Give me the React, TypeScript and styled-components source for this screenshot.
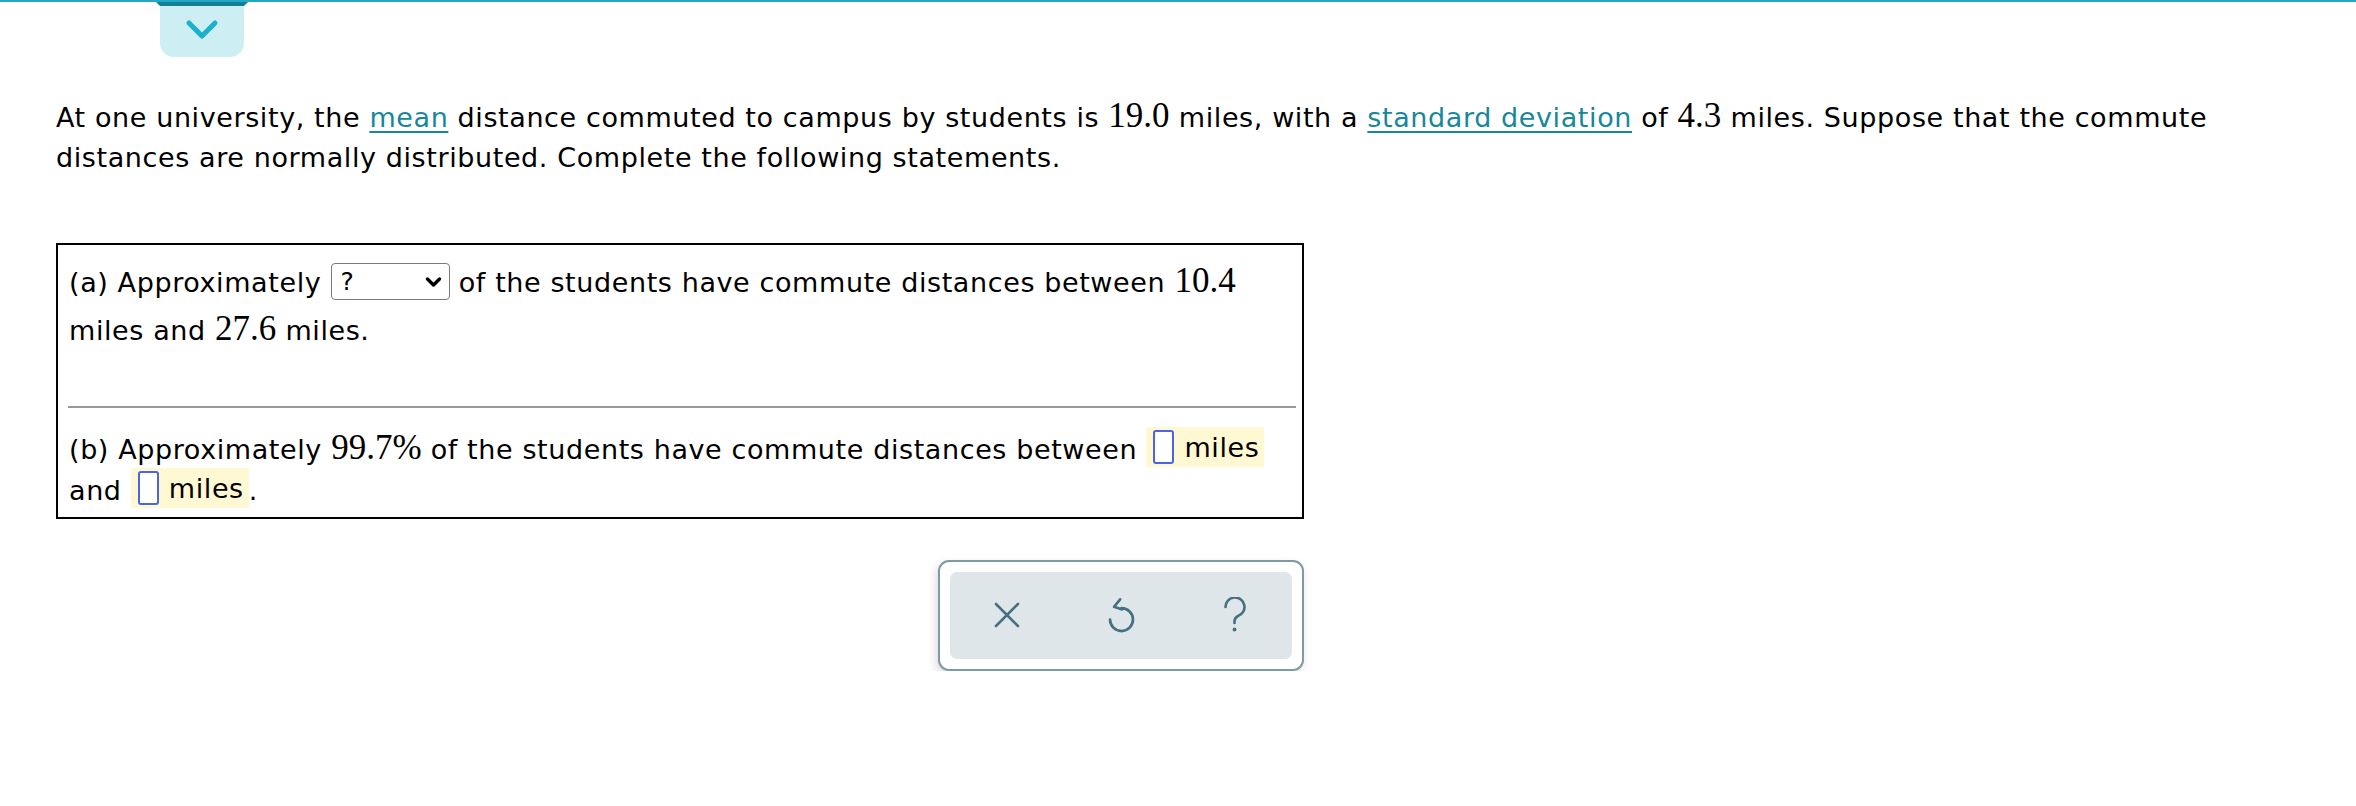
import styled, { createGlobalStyle } from 'styled-components';

const GlobalStyle = createGlobalStyle`
  body {
    margin: 0;
    background: #ffffff;
    color: #000000;
    font-family: "DejaVu Sans", Verdana, sans-serif;
  }
`;

const TopBar = styled.header`
  border-top: 2px solid #1fa9c4;
  padding-left: 160px;
`;

const Tab = styled.button`
  position: relative;
  width: 84px;
  height: 55px;
  border: none;
  padding: 0;
  background: #cdeff4;
  border-radius: 0 0 14px 14px;
  display: flex;
  align-items: center;
  justify-content: center;

  &::before {
    content: '';
    position: absolute;
    top: 0;
    left: -4px;
    right: -4px;
    height: 4px;
    background: #157f92;
    clip-path: polygon(0 0, 100% 0, calc(100% - 4px) 100%, 4px 100%);
  }
`;

const Main = styled.main`
  padding: 40.5px 0 0 56px;
`;

const Prompt = styled.p`
  margin: 0;
  max-width: 2250px;
  font-size: 27px;
  line-height: 40.5px;
  letter-spacing: 0.6px;
`;

const Term = styled.a`
  color: #17879a;
  text-decoration: underline;
  text-underline-offset: 4px;
  text-decoration-thickness: 2px;
`;

const Num = styled.span`
  font-family: "Liberation Serif", "Times New Roman", serif;
  font-size: 35px;
  letter-spacing: 0;
  line-height: 1;
`;

const QuestionBox = styled.section`
  box-sizing: border-box;
  width: 1248px;
  margin-top: 64.5px;
  border: 2px solid #000000;
  font-size: 27px;
  letter-spacing: 0.6px;
`;

const Part = styled.div<{ $lh: number; $pad: string }>`
  padding: ${({ $pad }) => $pad};
  line-height: ${({ $lh }) => $lh}px;
`;

const Divider = styled.hr`
  margin: 0 6px 0 10px;
  border: none;
  height: 2px;
  background: #999999;
`;

const SelectWrap = styled.span`
  position: relative;
  display: inline-block;
  vertical-align: middle;
  margin-top: -6px;
`;

const Select = styled.select`
  appearance: none;
  box-sizing: border-box;
  width: 119px;
  height: 37px;
  border: 1.5px solid #7a7a7a;
  border-radius: 4px;
  background: #ffffff;
  padding: 0 0 0 9px;
  font-family: "DejaVu Sans", Verdana, sans-serif;
  font-size: 25px;
  color: #000000;
  display: block;
`;

const SelectChevron = styled.svg`
  position: absolute;
  right: 7px;
  top: 13px;
  pointer-events: none;
`;

const AnswerSlot = styled.span`
  display: inline-flex;
  align-items: center;
  gap: 10px;
  height: 40px;
  padding: 0 5px 0 7px;
  background: #fff9d3;
  vertical-align: middle;
  margin-top: -8px;
`;

const Blank = styled.input`
  box-sizing: border-box;
  width: 21px;
  height: 34px;
  padding: 0;
  border: 2px solid #4d63e6;
  border-radius: 3px;
  background: #ffffff;
`;

const ToolRow = styled.div`
  width: 1248px;
  margin-top: 41px;
  display: flex;
  justify-content: flex-end;
`;

const Toolbar = styled.div`
  box-sizing: border-box;
  width: 366px;
  height: 111px;
  padding: 10px;
  border: 2px solid #7e9aa4;
  border-radius: 11px;
  background: #ffffff;
  box-shadow: -2px 4px 10px rgba(0, 0, 0, 0.14);
`;

const ToolInner = styled.div`
  height: 100%;
  display: grid;
  grid-template-columns: repeat(3, 1fr);
  background: #dfe6e9;
  border-radius: 7px;
`;

const ToolButton = styled.button`
  border: none;
  background: transparent;
  padding: 0;
  display: flex;
  align-items: center;
  justify-content: center;
  color: #46707f;
`;

const App = () => {
  return (
    <>
      <GlobalStyle />
      <TopBar>
        <Tab aria-label="Collapse">
          <svg width="34" height="22" viewBox="0 0 34 22">
            <path
              d="M4 4 L17 17 L30 4"
              fill="none"
              stroke="#1bb0cb"
              strokeWidth="5"
              strokeLinecap="round"
              strokeLinejoin="round"
            />
          </svg>
        </Tab>
      </TopBar>
      <Main>
        <Prompt>
          At one university, the <Term href="#">mean</Term> distance commuted to campus by students is{' '}
          <Num>19.0</Num> miles, with a <Term href="#">standard deviation</Term> of <Num>4.3</Num> miles.
          Suppose that the commute distances are normally distributed. Complete the following statements.
        </Prompt>

        <QuestionBox>
          <Part $lh={47.5} $pad="14px 11px 52px">
            (a) Approximately{' '}
            <SelectWrap>
              <Select defaultValue="?" aria-label="percentage">
                <option>?</option>
                <option>68%</option>
                <option>75%</option>
                <option>95%</option>
                <option>99.7%</option>
              </Select>
              <SelectChevron width="19" height="12" viewBox="0 0 19 12">
                <path
                  d="M3.5 3 L9.5 9 L15.5 3"
                  fill="none"
                  stroke="#000"
                  strokeWidth="3.4"
                  strokeLinecap="round"
                  strokeLinejoin="round"
                />
              </SelectChevron>
            </SelectWrap>{' '}
            of the students have commute distances between <Num>10.4</Num> miles and <Num>27.6</Num> miles.
          </Part>
          <Divider />
          <Part $lh={41} $pad="20.5px 11px 6px">
            (b) Approximately <Num>99.7%</Num> of the students have commute distances between{' '}
            <AnswerSlot>
              <Blank aria-label="lower bound" />
              miles
            </AnswerSlot>{' '}
            and{' '}
            <AnswerSlot>
              <Blank aria-label="upper bound" />
              miles
            </AnswerSlot>
            .
          </Part>
        </QuestionBox>

        <ToolRow>
          <Toolbar>
            <ToolInner>
              <ToolButton aria-label="Clear">
                <svg width="26" height="26" viewBox="0 0 26 26">
                  <path
                    d="M2 2 L24 24 M24 2 L2 24"
                    stroke="currentColor"
                    strokeWidth="2.6"
                    strokeLinecap="round"
                  />
                </svg>
              </ToolButton>
              <ToolButton aria-label="Undo">
                <svg width="27" height="36" viewBox="0 0 80 105">
                  <path
                    d="M40 32 A34 34 0 1 1 6 66"
                    fill="none"
                    stroke="currentColor"
                    strokeWidth="8"
                    strokeLinecap="round"
                  />
                  <path
                    d="M36 6 L18 28 L42 36"
                    fill="none"
                    stroke="currentColor"
                    strokeWidth="8"
                    strokeLinecap="round"
                    strokeLinejoin="round"
                  />
                </svg>
              </ToolButton>
              <ToolButton aria-label="Help">
                <svg width="24" height="36" viewBox="0 0 24 36">
                  <path
                    d="M2.5 10 A9.5 9.5 0 1 1 15 19 C12.5 20.2 11.5 22 11.5 24.5 V26"
                    fill="none"
                    stroke="currentColor"
                    strokeWidth="2.6"
                    strokeLinecap="round"
                  />
                  <circle cx="11.5" cy="32.5" r="1.9" fill="currentColor" />
                </svg>
              </ToolButton>
            </ToolInner>
          </Toolbar>
        </ToolRow>
      </Main>
    </>
  );
};

export default App;
